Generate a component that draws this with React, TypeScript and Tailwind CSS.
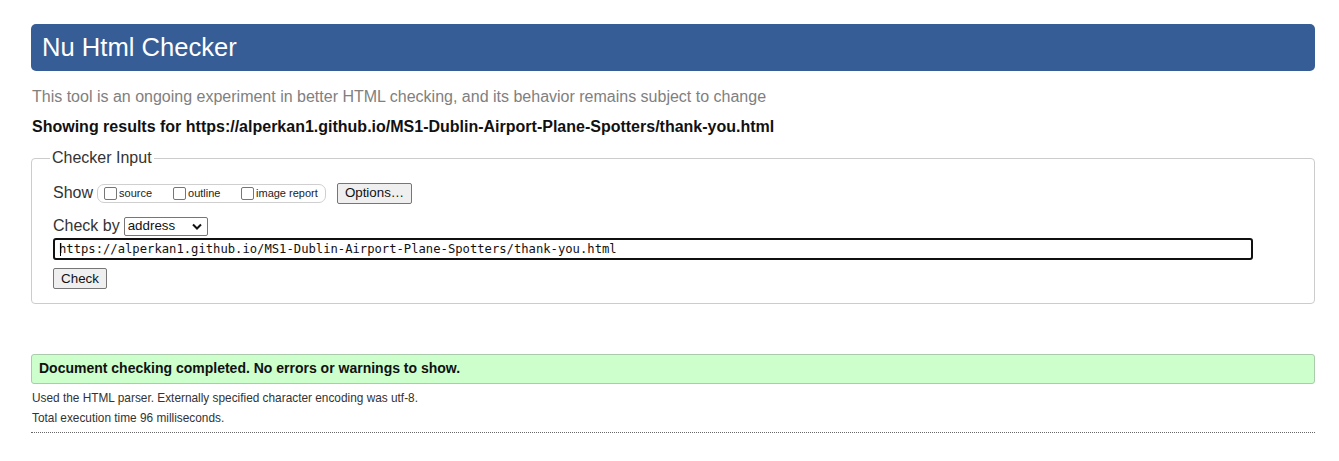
import React from "react";

function Box({ label }: { label: string }) {
  return (
    <label className="flex items-center">
      <span className="inline-block w-[13px] h-[13px] border border-[#767676] rounded-[2px] bg-white mr-[2px]" />
      <span className="text-[11px] text-[#222]">{label}</span>
    </label>
  );
}

export default function App() {
  return (
    <div className="bg-white min-h-[461px] pt-[24px] pl-[31px] text-[#222]" style={{ fontFamily: '"Liberation Sans", Arial, sans-serif' }}>
      <div className="w-[1284px]">
        <div className="h-[47px] bg-[#365d95] rounded-[5px] flex items-center px-[11px]">
          <h1 className="text-white text-[25.6px] leading-none font-normal">Nu Html Checker</h1>
        </div>
        <p className="mt-[16px] text-[16px] leading-[20px] text-[#808080] pl-[1px]">
          This tool is an ongoing experiment in better HTML checking, and its behavior remains subject to change
        </p>
        <p className="mt-[10px] text-[16px] leading-[20px] font-bold text-[#111] pl-[1px]">
          Showing results for https://alperkan1.github.io/MS1-Dublin-Airport-Plane-Spotters/thank-you.html
        </p>
        <fieldset className="mt-[11px] border border-[#cccccc] rounded-[4px] pl-[18px] pr-[18px] pb-[13px]">
          <legend className="px-[2px] text-[16px] leading-[20px] text-[#333]">Checker Input</legend>
          <div className="pl-[3px]">
            <div className="mt-[14px] flex items-center h-[22px]">
              <span className="text-[16px] leading-[20px] text-[#333]">Show</span>
              <div className="ml-[4px] h-[19px] w-[229px] border border-[#cfcfcf] rounded-[7px] flex items-center pl-[6px]">
                <div className="w-[69px]"><Box label="source" /></div>
                <div className="w-[68px]"><Box label="outline" /></div>
                <Box label="image report" />
              </div>
              <button className="ml-[11px] h-[21px] w-[75px] bg-[#efefef] border border-[#767676] rounded-[2px] text-[13.33px] text-[#111] leading-none">
                Options…
              </button>
            </div>
            <div className="mt-[11px] flex items-center h-[22px]">
              <span className="text-[16px] leading-[20px] text-[#333]">Check by</span>
              <div className="ml-[4px] h-[19px] w-[84px] border border-[#767676] rounded-[2px] bg-white flex items-center justify-between pl-[3px] pr-[5px]">
                <span className="text-[13.33px] text-[#111] leading-none">address</span>
                <svg width="10" height="7" viewBox="0 0 10 7"><path d="M1 1.5 L5 5.5 L9 1.5" fill="none" stroke="#111" strokeWidth="2" /></svg>
              </div>
            </div>
            <div className="mt-[1px] w-[1200px] h-[22px] border-2 border-[#101010] rounded-[3px] flex items-center pl-[4px] relative">
              <span className="text-[12.2px] text-[#111] leading-none" style={{ fontFamily: '"DejaVu Sans Mono", "Liberation Mono", monospace' }}>
                https://alperkan1.github.io/MS1-Dublin-Airport-Plane-Spotters/thank-you.html
              </span>
              <span className="absolute left-[5px] top-[3px] w-[1px] h-[13px] bg-black" />
            </div>
            <button className="mt-[8px] h-[21px] w-[54px] bg-[#efefef] border border-[#767676] rounded-[2px] text-[13.33px] text-[#111] leading-none">
              Check
            </button>
          </div>
        </fieldset>
        <div className="mt-[50px] h-[30px] bg-[#ccffcc] border border-[#aaccaa] rounded-[3px] flex items-center pl-[7px]">
          <span className="text-[14px] font-bold text-[#111]">Document checking completed. No errors or warnings to show.</span>
        </div>
        <div className="border-b border-dotted border-[#666] pb-[4px] pl-[1px]">
          <p className="mt-[4px] text-[11.85px] leading-[20px] text-[#333]">Used the HTML parser. Externally specified character encoding was utf-8.</p>
          <p className="text-[11.85px] leading-[20px] text-[#333]">Total execution time 96 milliseconds.</p>
        </div>
      </div>
    </div>
  );
}
